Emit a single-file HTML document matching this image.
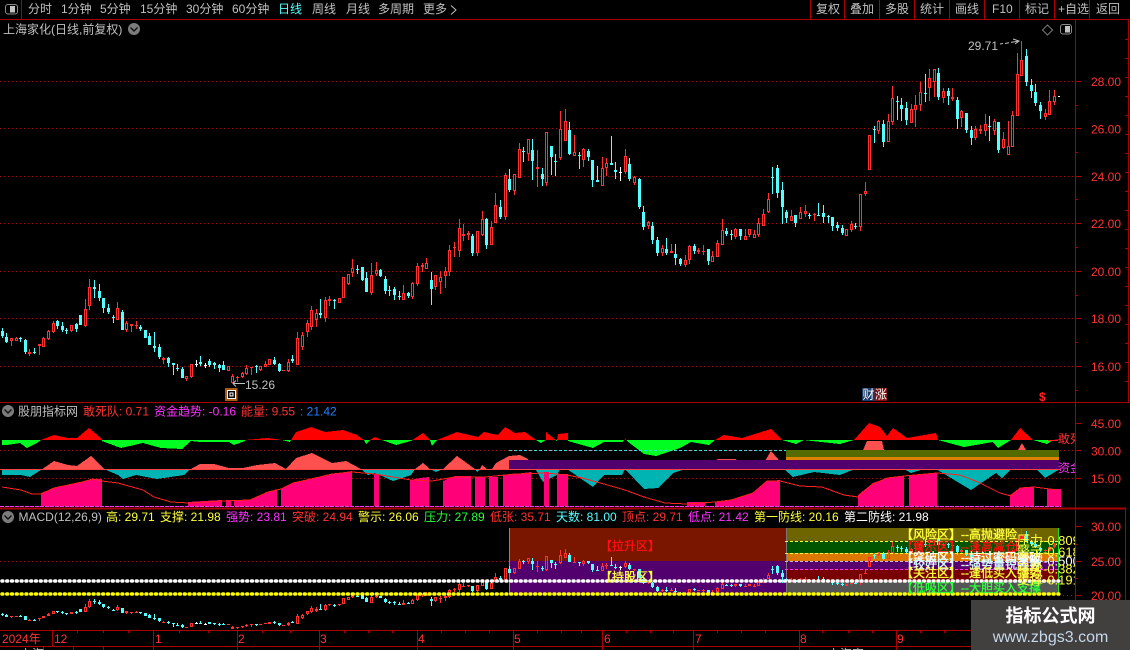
<!DOCTYPE html>
<html><head><meta charset="utf-8"><title>上海家化</title>
<style>
html,body{margin:0;padding:0;background:#000;width:1130px;height:650px;overflow:hidden}
svg{display:block;position:absolute;left:0;top:0}
text{font-family:"Liberation Sans","Noto Sans CJK SC",sans-serif;font-size:12px}
.g{fill:#c0c0c0}.r{fill:#ff3232}.y{fill:#ffff3c}.m{fill:#ff33ff}.c{fill:#54ffff}.w{fill:#fff}.gr{fill:#2bff3c}.b{fill:#2080ff}
.z text{stroke-width:.35px}
.wm{position:absolute;left:971px;top:600px;width:159px;height:50px;background:#423f3f;text-align:center;color:#fff}
.wm div{font-family:"Liberation Sans","Noto Sans CJK SC",sans-serif}
.wm .t{font-size:18px;font-weight:bold;line-height:24px;margin-top:4px}
.wm .u{font-size:16px;line-height:20px;color:#c4d8ea}
</style></head><body>
<svg width="1130" height="650" viewBox="0 0 1130 650" xmlns="http://www.w3.org/2000/svg">
<defs>
<clipPath id="cl"><rect x="0" y="20" width="1075" height="630"/></clipPath>
<clipPath id="ap"><rect x="0" y="405" width="1075" height="35"/></clipPath>
<clipPath id="an"><rect x="0" y="440" width="1075" height="30"/></clipPath>
<clipPath id="bp"><rect x="0" y="430" width="1075" height="39"/></clipPath>
<clipPath id="bn"><rect x="0" y="469" width="1075" height="38"/></clipPath>
</defs>
<g shape-rendering="crispEdges">
<g stroke="#a01010" stroke-dasharray="1 3" stroke-width="1">
<path d="M0 81.5H1075M0 128.5H1075M0 176.5H1075M0 223.5H1075M0 271.5H1075M0 318.5H1075M0 366.5H1075"/>
<path d="M0 450.5H1075M0 478.5H1075M0 561.5H509M1059 561.5H1075M1059 595.5H1075"/>
</g>
</g>
<g id="areas" shape-rendering="crispEdges"></g>
<g shape-rendering="crispEdges">
<rect x="509" y="460" width="550" height="9" fill="#52006e"/>
<rect x="786" y="450" width="273" height="7" fill="#556b00"/>
<rect x="786" y="457" width="273" height="3" fill="#dc8200"/>
<path d="M509 450.5H786" stroke="#30e0e0" stroke-dasharray="3 2"/>
<path d="M0 469.5H1060" stroke="#ff4040"/>
<path d="M0 506.5H1061" stroke="#ff33ff" stroke-dasharray="4 1"/>
<rect x="509" y="528" width="277" height="33" fill="#7a1500"/>
<rect x="509" y="561" width="277" height="33" fill="#52006e"/>
<rect x="786" y="528" width="273" height="13" fill="#6e6400"/>
<rect x="786" y="541" width="273" height="12" fill="#005500"/>
<rect x="786" y="553" width="273" height="8" fill="#dc7800"/>
<rect x="786" y="561" width="273" height="8" fill="#5a006e"/>
<rect x="786" y="569" width="273" height="13" fill="#780000"/>
<rect x="786" y="582" width="273" height="12" fill="#555"/>
<path d="M509.5 528V594" stroke="#20d020"/>
<path d="M786.5 528V594" stroke="#777"/>
<path d="M1058.5 528V594" stroke="#20e020"/>
</g>
<g id="candles" shape-rendering="crispEdges"></g>
<g shape-rendering="crispEdges">
<path d="M785 541.5H1060M785 553.5H1060" stroke="#ffff3c" stroke-dasharray="3 2"/>
<path d="M785 561.5H1060" stroke="#c0c0c0" stroke-dasharray="3 2"/>
<path d="M785 569.5H1060" stroke="#ff33ff" stroke-dasharray="3 2"/>
</g>
<path d="M2 581H1060" stroke="#fff" stroke-width="3.6" stroke-linecap="round" stroke-dasharray="0.8 4"/>
<path d="M2 594H1060" stroke="#ffff00" stroke-width="3.6" stroke-linecap="round" stroke-dasharray="0.8 4"/>

<g shape-rendering="crispEdges" fill="none" stroke="#aa0000">
<path d="M0 19.5H1130M21.5 0V19M810.5 0V19M844.5 0V19M879.5 0V19M914.5 0V19M949.5 0V19M984.5 0V19M1019.5 0V19M1054.5 0V19M1089.5 0V19"/>
<path d="M1075.5 20V630M1128.5 20V402M1125.5 509V630"/>
<path d="M0 402.5H1130"/>
<path d="M0 508.5H1126" stroke-width="2"/>
<path d="M1075 81.5h6M1075 105.5h3M1075 128.5h6M1075 152.5h3M1075 176.5h6M1075 199.5h3M1075 223.5h6M1075 247.5h3M1075 271.5h6M1075 295.5h3M1075 318.5h6M1075 342.5h3M1075 366.5h6M1075 390.5h3"/>
<path d="M1075 423.5h6M1075 450.5h6M1075 478.5h6M1075 526.5h6M1075 544.5h3M1075 561.5h6M1075 578.5h3M1075 595.5h6"/>
<path d="M1125 39.5h3M1125 58.5h3M1125 77.5h3M1125 96.5h3M1125 115.5h3M1125 134.5h3M1125 153.5h3M1125 172.5h3M1125 191.5h3M1125 210.5h3M1125 229.5h3M1125 248.5h3M1125 267.5h3M1125 286.5h3M1125 305.5h3M1125 324.5h3M1125 343.5h3M1125 362.5h3M1125 381.5h3"/>
<path d="M0 630.5H1075M0 646.5H1075"/>
<path d="M52.5 631V646M153.5 631V646M237.5 631V646M319.5 631V646M417.5 631V646M513.5 631V646M602.5 631V646M693.5 631V646M799.5 631V646M896.5 631V646"/>
<path d="M77.5 631v2M103.5 631v2M128.5 631v2M179.5 631v2M208.5 631v2M262.5 631v2M290.5 631v2M344.5 631v2M368.5 631v2M392.5 631v2M441.5 631v2M465.5 631v2M489.5 631v2M537.5 631v2M561.5 631v2M581.5 631v2M626.5 631v2M650.5 631v2M673.5 631v2M717.5 631v2M741.5 631v2M765.5 631v2M822.5 631v2M848.5 631v2M872.5 631v2M920.5 631v2M944.5 631v2"/>
<path d="M43.5 647v3M73.5 647v3M103.5 647v3M153.5 647v3M237.5 647v3M319.5 647v3M417.5 647v3M513.5 647v3M602.5 647v3M693.5 647v3M799.5 647v3M896.5 647v3"/>
</g>

<rect x="5.5" y="4.5" width="12" height="9.5" rx="2.5" fill="none" stroke="#8c8c8c"/>
<rect x="10" y="6" width="5" height="6.5" fill="#c4c4c4" shape-rendering="crispEdges"/>
<text x="28" y="13" class="g">分时</text>
<text x="61" y="13" class="g">1分钟</text>
<text x="100" y="13" class="g">5分钟</text>
<text x="140" y="13" class="g">15分钟</text>
<text x="186" y="13" class="g">30分钟</text>
<text x="232" y="13" class="g">60分钟</text>
<text x="278" y="13" class="c">日线</text>
<text x="312" y="13" class="g">周线</text>
<text x="346" y="13" class="g">月线</text>
<text x="378" y="13" class="g">多周期</text>
<text x="423" y="13" class="g">更多</text>
<path d="M451 5.5l5 4.5-5 4.5" fill="none" stroke="#c0c0c0"/>
<text x="816" y="13" class="g">复权</text>
<text x="850" y="13" class="g">叠加</text>
<text x="885" y="13" class="g">多股</text>
<text x="920" y="13" class="g">统计</text>
<text x="955" y="13" class="g">画线</text>
<text x="992" y="13" class="g">F10</text>
<text x="1025" y="13" class="g">标记</text>
<text x="1058" y="13" class="g">+自选</text>
<text x="1096" y="13" class="g">返回</text>

<text x="3" y="33.5" class="g">上海家化(日线,前复权)</text>
<circle cx="134" cy="29" r="6" fill="#7c7c7c"/><path d="M130.5 27.5l3.5 3.5 3.5-3.5" fill="none" stroke="#111" stroke-width="1.4"/>
<path d="M1047.5 25l5 5-5 5-5-5z" fill="none" stroke="#7a7a7a"/>
<rect x="1060.5" y="24.5" width="11" height="9.5" rx="2.5" fill="none" stroke="#8c8c8c"/>
<rect x="1065" y="26" width="5" height="6.5" fill="#c4c4c4" shape-rendering="crispEdges"/>
<text x="968" y="50" class="g">29.71</text>
<path d="M1000 44l3-.5M1005 43.5l4-.7M1011 42.4l8-1.4M1013 39l6 2-4 3" fill="none" stroke="#c0c0c0"/>
<path d="M233 383.5H245M236 380.5l-3 3 3 3" fill="none" stroke="#c0c0c0"/>
<text x="245" y="389" class="g">15.26</text>
<rect x="225" y="388" width="12.500" height="13" fill="#a85a14" shape-rendering="crispEdges"/>
<rect x="227.500" y="390.500" width="8" height="8" fill="#000" stroke="#fff" shape-rendering="crispEdges"/>
<rect x="230" y="393" width="3" height="3" fill="none" stroke="#fff" shape-rendering="crispEdges"/>
<rect x="862" y="388" width="12.500" height="13" fill="#1a3a6a" shape-rendering="crispEdges"/>
<rect x="874.500" y="388" width="12.500" height="13" fill="#7a1010" shape-rendering="crispEdges"/>
<text x="862.500" y="398.500" class="w">财</text><text x="875" y="398.500" class="w">涨</text>
<text x="1039" y="401" style="font-weight:bold" fill="#ff2020">$</text>

<g class="r">
<text x="1091" y="86" class="r">28.00</text><text x="1091" y="133.500" class="r">26.00</text><text x="1091" y="181" class="r">24.00</text><text x="1091" y="228" class="r">22.00</text><text x="1091" y="276" class="r">20.00</text><text x="1091" y="323" class="r">18.00</text><text x="1091" y="371" class="r">16.00</text>
<text x="1091" y="428" class="r">45.00</text><text x="1091" y="455.500" class="r">30.00</text><text x="1091" y="483" class="r">15.00</text>
<text x="1091" y="531" class="r">30.00</text><text x="1091" y="566" class="r">25.00</text><text x="1091" y="600" class="r">20.00</text>
</g>

<circle cx="8" cy="411" r="6" fill="#7c7c7c"/><path d="M4.500 409.500l3.500 3.500 3.500-3.500" fill="none" stroke="#111" stroke-width="1.4"/>
<text x="18" y="415.500" class="g">股朋指标网</text>
<text x="83" y="415.500" class="r">敢死队: 0.71</text>
<text x="154" y="415.500" class="m">资金趋势: -0.16</text>
<text x="241" y="415.500" class="r">能量: 9.55</text>
<text x="300" y="415.500" class="b">: 21.42</text>
<g clip-path="url(#cl)">
<path d="M1048 440.500H1058" stroke="#ff2020" shape-rendering="crispEdges"/>
<text x="1058" y="443" class="r">敢死</text>
<text x="1058" y="472" class="m">资金</text>
</g>

<circle cx="8" cy="517" r="6" fill="#7c7c7c"/><path d="M4.500 515.500l3.500 3.500 3.500-3.500" fill="none" stroke="#111" stroke-width="1.4"/>
<text x="18.500" y="521" class="g">MACD(12,26,9)</text>
<text x="106" y="521" class="y">高: 29.71</text>
<text x="160" y="521" class="y">支撑: 21.98</text>
<text x="226" y="521" class="m">强势: 23.81</text>
<text x="292" y="521" class="r">突破: 24.94</text>
<text x="358" y="521" class="y">警示: 26.06</text>
<text x="424" y="521" class="gr">压力: 27.89</text>
<text x="490" y="521" class="r">低张: 35.71</text>
<text x="556" y="521" class="c">天数: 81.00</text>
<text x="622" y="521" class="r">顶点: 29.71</text>
<text x="688" y="521" class="m">低点: 21.42</text>
<text x="754" y="521" class="y">第一防线: 20.16</text>
<text x="844" y="521" class="w">第二防线: 21.98</text>

<g class="z">
<text x="600" y="550" fill="#ff1010" stroke="#ff1010">【拉升区】</text>
<text x="600" y="581" fill="#ffff3c" stroke="#ffff3c">【持股区】</text>
<text x="901" y="538.500" fill="#ffff3c" stroke="#ffff3c">【风险区】--高抛避险</text>
<text x="901" y="551" fill="#ff1010" stroke="#ff1010">【警示区】--逢高减仓</text>
<text x="901" y="561.500" fill="#fff" stroke="#fff">【突破区】--持过密码突破</text>
<text x="901" y="568.500" fill="#d0ffff" stroke="#d0ffff">【较好区】--强势量锐强势</text>
<text x="901" y="577" fill="#ffff3c" stroke="#ffff3c">【关注区】--逢低买入强势</text>
<text x="901" y="592" fill="#2bff3c" stroke="#2bff3c">【低吸区】--大胆买入支撑</text>
</g>
<g clip-path="url(#cl)" style="font-size:13px">
<text x="1017" y="545" class="y" style="font-size:13px">压力-0.809</text>
<text x="1017" y="556.500" class="y" style="font-size:13px">警示-0.618</text>
<text x="1017" y="565.500" class="w" style="font-size:13px">突破-0.500</text>
<text x="1017" y="573.500" class="y" style="font-size:13px">强势-0.382</text>
<text x="1017" y="584.500" class="y" style="font-size:13px">支撑-0.191</text>
</g>

<text x="2" y="643" class="r">2024年</text>
<text x="54" y="643" class="r">12</text>
<text x="155" y="643" class="r">1</text>
<text x="238" y="643" class="r">2</text>
<text x="320" y="643" class="r">3</text>
<text x="418" y="643" class="r">4</text>
<text x="514" y="643" class="r">5</text>
<text x="604" y="643" class="r">6</text>
<text x="695" y="643" class="r">7</text>
<text x="800" y="643" class="r">8</text>
<text x="897" y="643" class="r">9</text>
<text x="20" y="658" class="g">上海</text>
<text x="828" y="658" class="g">上海家</text>
</svg>
<div class="wm"><div class="t">指标公式网</div><div class="u">www.zbgs3.com</div></div>
<script>
(function(){
var NS='http://www.w3.org/2000/svg';
var segs=[
[0,260,"c7,213,229,205,233;c19,231,246,220,249;r34,235,243,235,258;r49,234,242,232,243;c61,235,238,231,246;c76,240,276,237,282;r88,276,281,268,287;c103,276,278,265,282;r118,253,257,253,285;r130,234,260,232,260;r145,213,237,210,240;r160,190,216,184,218;c172,183,198,180,207;c187,198,210,187,217;c199,210,213,205,221;r214,196,212,196,217;c229,192,207,189,215;c241,165,195,165,196;r256,148,198,118,200;r268,82,139,57,150;c283,81,87,60,114;c298,94,113,72,122;c310,114,143,114,158;c325,144,157,133,163;c340,172,174,166,188;r352,145,179,127,181;c367,156,209,150,209;r379,190,209,184,216;r394,193,197,193,215;r409,194,196,183,206;c421,200,208,195,213;c436,210,233,210,233;c448,228,255,220,255;c463,259,263,216,275;c478,262,291,252,296;r490,294,299,291,311;c505,294,310,291,320;c520,309,314,309,345;c532,324,327,311,333;c547,326,353,320,355;r559,349,356,349,362;r574,313,352,313,353;w589,312,313,300,320;c601,307,312,288,318;w616,316,317,309,324;c628,303,316,297,320;c643,310,314,305,327;c658,316,324,312,335;c670,316,330,304,330;r685,319,332,319,332;r697,348,369,343,369;r712,352,354,347,365;r727,340,351,336,355;r739,324,343,316,345;r754,322,325,322,345;c769,318,321,315,339;r781,319,330,319,334;r796,313,320,304,320;r808,298,315,298,316;c823,301,312,292,316;c838,313,332,310,335;r850,331,334,331,334;r865,307,332,298,335;c877,298,302,286,310;r892,235,314,217,316;r906,225,260,215,270;r921,190,215,180,230"],
[300,100,"r34,630,680,618,690;r49,640,660,627,680;c61,640,645,598,655;r76,600,655,591,665;r88,598,602,588,617;c103,600,602,598,627;r118,595,608,595,610;r130,531,594,531,594;r145,522,552,522,555;r157,505,518,477,530;c172,507,509,495,521;c187,501,541,501,543;c199,534,575,516,577;r214,525,580,489,584;r229,511,522,486,527;c241,510,528,507,530;c256,537,573,529,582;c268,570,573,558,588;c283,568,585,561,600;c298,588,589,573,600;r310,580,599,555,599;c325,579,589,575,594;r337,549,590,546,597;r352,498,552,490,558;r367,495,500,490,516;r379,490,507,474,507;c394,540,567,516,615;r406,526,560,526,570;r421,531,545,513,582;r436,514,527,501,564;r448,450,517,435,527;r463,442,445,426,471;r478,384,452,357,471;r490,403,407,372,423;r505,400,404,393,419;c517,408,459,403,468;r532,394,458,394,468;r547,357,404,333,407;c559,357,435,354,447;r574,382,434,363,434;r586,316,368,279,368;c601,322,351,300,357;r616,226,350,220,360;c628,237,270,207,276;r643,223,273,223,285;r658,148,233,129,233;c670,154,156,140,186;r685,118,161,118,183;c697,150,183,117,240;r712,202,206,150,261;c727,222,237,204,258;r739,97,248,97,258;c754,139,170,139,226;c766,183,185,162,228;r781,87,173,33,180;r796,64,122,27,122;c808,90,162,66,164;r823,157,167,105,167;c838,165,167,156,207;r850,148,179,145,201;c865,153,170,147,183;c877,180,240,180,261;c892,240,245,198,245;r907,203,258,171,258;r919,190,203,174,228;c934,189,194,108,194;c946,210,215,186,237;w961,217,218,201,243;r976,168,216,147,222;c988,192,237,174,243;r1003,231,248,228,255;c1018,237,321,234,327;c1030,336,381,318,390;r1045,366,378,363,387;c1057,378,420,366,432;c1072,420,459,411,468;r1087,445,459,435,468;c1099,447,459,414,465;r1114,454,459,432,459;c1126,462,474,432,495;c1141,477,492,474,498;r1156,481,495,465,501;r1168,438,479,435,492;c1183,438,453,432,462;r1195,450,455,444,462"],
[700,40,"r10,633,637,615,645;c25,627,663,627,675;r37,648,665,633,665;r52,610,650,600,650;r67,570,614,537,614;c79,573,582,564,588;c94,582,583,570,600;r106,567,591,564,597;c121,567,588,567,600;r136,588,599,567,599;r148,568,585,568,591;r163,583,593,570,593;r175,549,584,534,591;r190,522,557,507,557;r205,477,516,459,519;c217,411,412,381,462;c232,384,459,375,474;c247,450,500,426,552;c259,516,534,510,549;r274,528,543,510,543;c286,525,549,525,561;r301,516,537,501,537;r316,514,522,495,531;c328,525,526,519,537;r343,522,526,518,543;c355,524,525,489,525;c370,519,531,495,549;c385,528,529,525,549;c397,531,558,531,573;c412,555,564,546,573;c427,564,579,555,585;r439,567,588,567,588;r454,552,570,543,576;c466,558,562,549,567;r481,462,560,462,573;r496,454,462,426,468;r508,285,389,285,389;c523,267,268,258,309;r535,243,273,240,282;c550,252,306,240,321;r565,243,306,222,306;r577,174,246,138,255;c592,183,184,168,240;c604,195,207,174,243;c619,204,240,186,255;r634,207,249,192,249;r646,195,209,165,261;r661,156,194,126,213;c676,159,160,102,186;r688,114,144,87,183;r703,87,125,87,171;c715,99,171,84,180;r730,153,174,144,189;c745,153,168,144,195;r757,171,177,144,183;c772,180,237,171,267;r784,213,234,210,261;c799,219,270,219,279;c814,270,294,258,315;r826,267,294,258,300;r841,267,272,255,282;r856,252,273,222,288;c868,258,260,228,303;r883,243,273,237,285;c895,246,330,246,339;r910,297,324,276,327;r925,318,345,243,345;r937,225,321,213,321;r952,102,228,39,228;r964,60,108,3,108;c979,48,126,27,138;c994,135,153,117,174;c1006,156,189,132,198;c1021,195,213,186,237;r1036,219,231,207,240;r1048,183,225,150,225;r1063,168,186,150,195"]
];
var d={r:'',c:'',w:''};
function R(k,x,y,w,h){if(h<1)h=1;if(w<1)w=1;d[k]+='M'+x+' '+y+'h'+w+'v'+h+'h'+(-w)+'z';}
function draw(k,cx,t,b,wt,wb){
  t=Math.round(t);b=Math.round(b);wt=Math.round(wt);wb=Math.round(wb);
  if(b<t+1)b=t+1;
  if(t>wt)R(k,cx,wt,1,t-wt);
  if(wb>b)R(k,cx,b,1,wb-b);
  if(k==='r'&&b-t>=3){
    R(k,cx-1,t,3,1);R(k,cx-1,b-1,3,1);R(k,cx-1,t+1,1,b-t-2);R(k,cx+1,t+1,1,b-t-2);
  }else{
    R(k,cx-1,t,3,b-t);
  }
}
function m3(y){return 527+(y-33.7)*0.2917;}
segs.forEach(function(s){
  s[2].split(';').forEach(function(e){
    var k=e.charAt(0),a=e.slice(1).split(',').map(Number);
    var cx=Math.floor(s[0]+a[0]/3),ys=[a[1],a[2],a[3],a[4]].map(function(v){return s[1]+v/3;});
    draw(k,cx,ys[0],ys[1],Math.min(ys[2],ys[0]),Math.max(ys[3],ys[1]));
    draw(k,cx,m3(ys[0]),m3(ys[1]),m3(Math.min(ys[2],ys[0])),m3(Math.max(ys[3],ys[1])));
  });
});
R('w',1058,96,2,1);
var g=document.getElementById('candles');
[['r','#ff3232'],['c','#54ffff'],['w','#ffffff']].forEach(function(p){
  var e=document.createElementNS(NS,'path');e.setAttribute('d',d[p[0]]);e.setAttribute('fill',p[1]);g.appendChild(e);
});
var a=document.getElementById('areas');
function poly(pts,fill,clip){
  var e=document.createElementNS(NS,'polygon');e.setAttribute('points',pts);e.setAttribute('fill',fill);
  if(clip)e.setAttribute('clip-path','url(#'+clip+')');a.appendChild(e);
}
var A="2,440 2,445 7,445 20,443 27,448 37,443 41,440 54,435 68,438 77,438 89,428 102,439 102,441 121,448 143,443 161,448 182,449 191,441 200,442 229,442 234,445 245,441 245,440 268,438 282,440 290,442 296,432 311,427 325,432 343,430 357,435 364,440 366,444 370,440 375,437 382,440 396,445 411,441 423,433 430,440 432,446 437,440 457,432 478,437 484,432 498,435 505,427 515,433 525,432 536,440 541,443 546,440 546,432 557,441 558,434 568,433 568,441 593,448 604,442 622,442 625,439 627,441 644,454 656,456 680,448 691,442 709,445 715,440 724,435 742,438 771,429 782,440 796,444 804,440 812,441 840,444 854,440 869,423 880,427 887,436 893,428 907,438 936,433 938,440 964,447 993,442 998,448 1011,440 1020,428 1033,440 1047,444 1053,440 1060,439 1060,440";
poly(A,'#ff0000','ap');poly(A,'#00ff20','an');
var B="2,469 2,475 21,475 30,477 41,470 54,461 68,465 77,466 91,456 104,469 118,475 123,479 136,475 157,479 184,475 189,470 200,464 214,464 229,468 243,468 257,465 275,463 286,469 296,458 312,453 332,463 346,461 361,469 368,475 375,473 393,481 411,475 415,469 423,463 430,469 436,472 443,469 457,456 475,469 477,472 480,469 482,465 487,469 492,469 496,463 509,456 520,455 528,459 536,470 543,482 557,475 560,469 567,469 593,487 604,475 622,475 625,469 644,489 658,488 673,473 685,469 700,469 718,459 736,459 745,469 760,469 771,451 778,459 784,469 793,477 814,472 840,475 855,469 867,441 882,441 888,469 904,469 911,473 924,469 936,469 971,490 996,473 1002,478 1011,469 1018,450 1022,443 1026,450 1036,469 1045,478 1060,469";
poly(B,'#ff5050','bp');poly(B,'#00b4b4','bn');
var C=[
"41,493 54,488 68,485 82,482 93,479 102,479",
"188,502 221,500 222,500","226,500 231,500","234,500 250,500 257,497 268,492 277,489",
"281,489 293,483 311,479 332,474 352,471",
"374,474 379,474","410,480 420,478 429,477","443,481 455,476 471,476","475,477 485,477","489,477 498,477","503,475 515,474 531,472","544,472 549,472","557,474 568,474",
"687,502 705,502","715,502 731,500 753,493 767,481 780,480",
"858,495 873,483 887,478 904,476","909,475 925,474 937,473",
"1010,495 1020,488 1034,487","1047,489 1061,489"];
C.forEach(function(s){
  var p=s.split(' ');var x0=p[0].split(',')[0],x1=p[p.length-1].split(',')[0];
  poly(x0+',506 '+s+' '+x1+',506','#ff0078');
});
var L=document.createElementNS(NS,'polyline');
L.setAttribute('points',"2,487 21,490 32,494 41,494 54,488 68,485 82,482 93,479 102,481 118,483 143,490 154,497 171,502 189,503 221,501 250,500 268,492 281,489 293,483 311,479 332,474 352,472 375,474 393,477 411,480 432,481 455,477 485,477 515,474 545,473 567,475 582,478 604,484 625,490 644,497 665,503 687,504 715,502 731,500 753,493 767,481 780,481 800,486 822,487 844,495 858,497 873,484 887,478 904,476 937,473 960,475 978,482 1000,493 1011,496 1020,488 1034,487 1058,490");
L.setAttribute('fill','none');L.setAttribute('stroke','#ff2020');a.appendChild(L);
})();
</script>
</body></html>
